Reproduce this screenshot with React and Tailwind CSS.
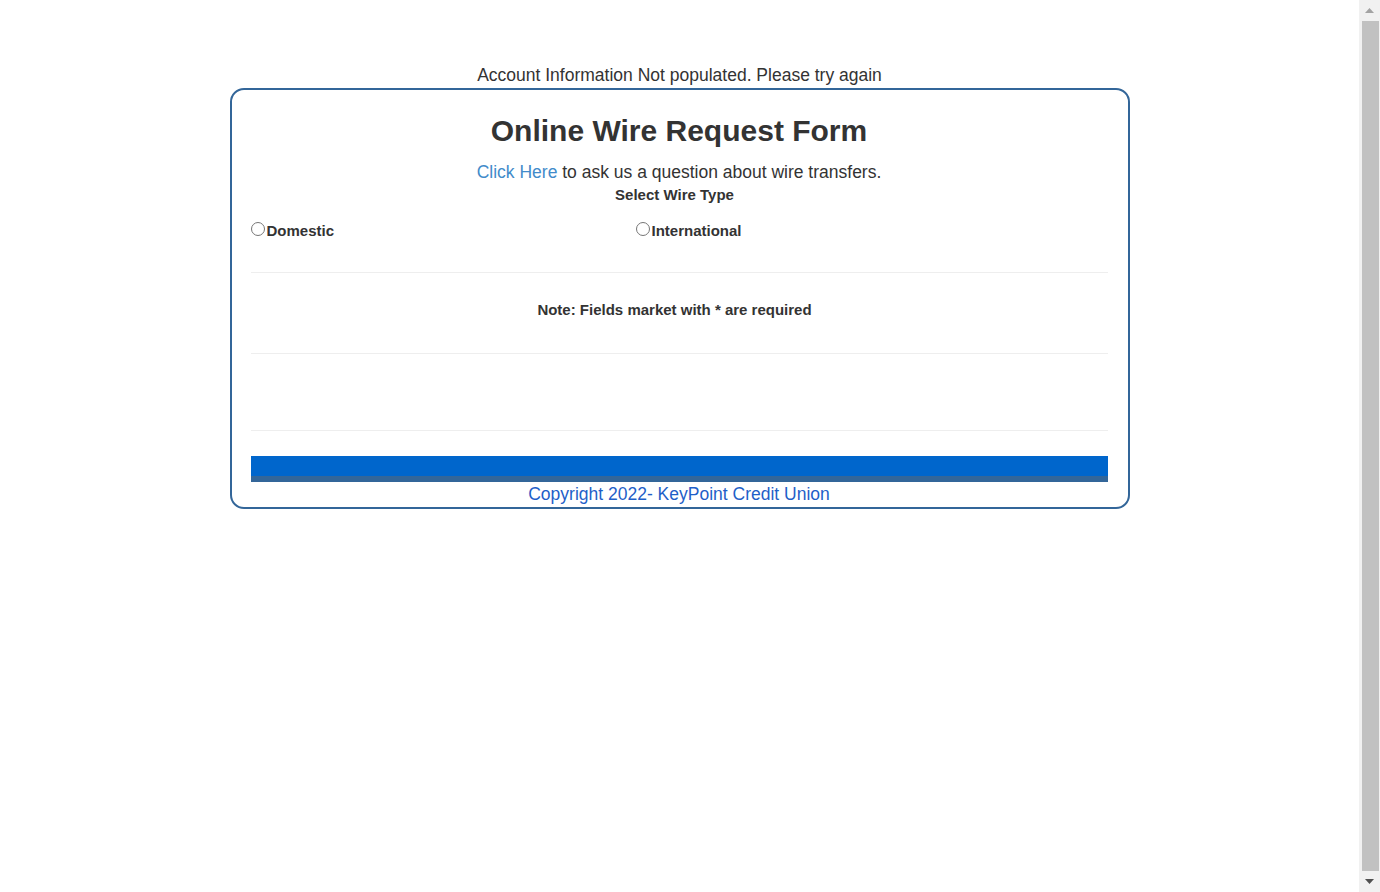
import React, { useState } from 'react';

const WIRE_TYPES = [
  { id: 'domestic', label: 'Domestic' },
  { id: 'international', label: 'International' },
];

const ScrollBar = () => (
  <div className="flex w-[21px] shrink-0 flex-col items-center bg-[#f1f1f1]">
    <div className="flex h-[21px] w-full items-center justify-center">
      <svg width="9" height="5" viewBox="0 0 9 5"><path d="M4.5 0L9 5H0z" fill="#a3a3a3" /></svg>
    </div>
    <div className="ml-[1px] w-[17px] flex-1 bg-[#c1c1c1]" />
    <div className="flex h-[21px] w-full items-center justify-center">
      <svg width="9" height="5" viewBox="0 0 9 5"><path d="M0 0h9L4.5 5z" fill="#505050" /></svg>
    </div>
  </div>
);

const App = () => {
  const [wireType, setWireType] = useState(null);

  return (
    <div className="flex h-[892px] overflow-hidden bg-white text-[#333] font-['Liberation_Sans',Arial,sans-serif]">
      <main className="flex-1">
        <div className="pt-[65px] text-center text-[17.5px] leading-[20px]">
          Account Information Not populated. Please try again
        </div>

        <div className="mx-auto mt-[3px] w-[900px] rounded-[14px] border-2 border-[#336699] pl-[19px] pr-[20px] pb-[3px]">
          <h1 className="pt-[24px] text-center text-[30px] font-bold leading-[33px]">
            Online Wire Request Form
          </h1>

          <p className="mt-[15px] text-center text-[17.5px] leading-[20px]">
            <a href="#" className="text-[#428bca]">Click Here</a> to ask us a question about wire transfers.
          </p>

          <p className="mt-[3px] pr-[9px] text-center text-[15px] font-bold leading-[20px]">Select Wire Type</p>

          <div className="mt-[16px] flex text-[15px] font-bold leading-[20px]">
            {WIRE_TYPES.map((t, i) => (
              <label
                key={t.id}
                className={`flex items-center ${i === 0 ? 'w-[385px]' : ''}`}
              >
                <input
                  type="radio"
                  name="wireType"
                  checked={wireType === t.id}
                  onChange={() => setWireType(t.id)}
                  className="m-0 mr-[2px] -mt-[5px] h-[14px] w-[14px]"
                />
                <span>{t.label}</span>
              </label>
            ))}
          </div>

          <hr className="mt-[31px] border-t border-[#eee]" />

          <p className="mt-[27px] pr-[9px] text-center text-[15px] font-bold leading-[20px]">
            Note: Fields market with * are required
          </p>

          <hr className="mt-[33px] border-t border-[#eee]" />

          <div className="h-[76px]" />

          <hr className="border-t border-[#eee]" />

          <div className="mt-[25px] h-[26px] border-b-[6px] border-[#336699] bg-[#0066cc]" />

          <p className="mt-[2px] text-center text-[17.5px] leading-[20px] text-[#1f5fc8]">
            Copyright 2022- KeyPoint Credit Union
          </p>
        </div>
      </main>
      <ScrollBar />
    </div>
  );
};

export default App;
